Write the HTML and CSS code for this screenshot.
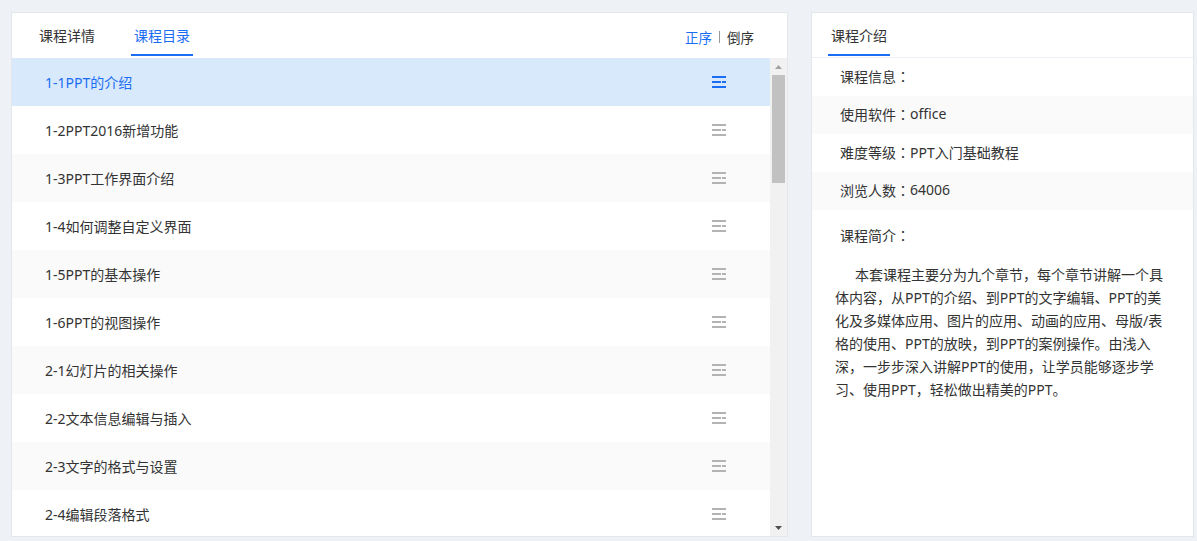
FILE: index.html
```html
<!DOCTYPE html>
<html lang="zh-CN">
<head>
<meta charset="utf-8">
<title>课程目录</title>
<link rel="stylesheet" href="styles.css">
</head>
<body>
<div class="panel panel-main">
  <div class="head">
    <div class="tab">课程详情</div>
    <div class="tab active">课程目录</div>
    <div class="order"><span class="on">正序</span><i class="sep"></i><span>倒序</span></div>
  </div>
  <div class="body">
    <ul class="list">
      <li class="row current"><span>1-1PPT的介绍</span><svg class="ico" width="14" height="12" viewBox="0 0 14 12"><rect x="0" y="0" width="14" height="2"/><rect x="0" y="5" width="9" height="2"/><rect x="10" y="5" width="4" height="2"/><rect x="0" y="10" width="14" height="2"/></svg></li>
      <li class="row"><span>1-2PPT2016新增功能</span><svg class="ico" width="14" height="12" viewBox="0 0 14 12"><rect x="0" y="0" width="14" height="2"/><rect x="0" y="5" width="9" height="2"/><rect x="10" y="5" width="4" height="2"/><rect x="0" y="10" width="14" height="2"/></svg></li>
      <li class="row"><span>1-3PPT工作界面介绍</span><svg class="ico" width="14" height="12" viewBox="0 0 14 12"><rect x="0" y="0" width="14" height="2"/><rect x="0" y="5" width="9" height="2"/><rect x="10" y="5" width="4" height="2"/><rect x="0" y="10" width="14" height="2"/></svg></li>
      <li class="row"><span>1-4如何调整自定义界面</span><svg class="ico" width="14" height="12" viewBox="0 0 14 12"><rect x="0" y="0" width="14" height="2"/><rect x="0" y="5" width="9" height="2"/><rect x="10" y="5" width="4" height="2"/><rect x="0" y="10" width="14" height="2"/></svg></li>
      <li class="row"><span>1-5PPT的基本操作</span><svg class="ico" width="14" height="12" viewBox="0 0 14 12"><rect x="0" y="0" width="14" height="2"/><rect x="0" y="5" width="9" height="2"/><rect x="10" y="5" width="4" height="2"/><rect x="0" y="10" width="14" height="2"/></svg></li>
      <li class="row"><span>1-6PPT的视图操作</span><svg class="ico" width="14" height="12" viewBox="0 0 14 12"><rect x="0" y="0" width="14" height="2"/><rect x="0" y="5" width="9" height="2"/><rect x="10" y="5" width="4" height="2"/><rect x="0" y="10" width="14" height="2"/></svg></li>
      <li class="row"><span>2-1幻灯片的相关操作</span><svg class="ico" width="14" height="12" viewBox="0 0 14 12"><rect x="0" y="0" width="14" height="2"/><rect x="0" y="5" width="9" height="2"/><rect x="10" y="5" width="4" height="2"/><rect x="0" y="10" width="14" height="2"/></svg></li>
      <li class="row"><span>2-2文本信息编辑与插入</span><svg class="ico" width="14" height="12" viewBox="0 0 14 12"><rect x="0" y="0" width="14" height="2"/><rect x="0" y="5" width="9" height="2"/><rect x="10" y="5" width="4" height="2"/><rect x="0" y="10" width="14" height="2"/></svg></li>
      <li class="row"><span>2-3文字的格式与设置</span><svg class="ico" width="14" height="12" viewBox="0 0 14 12"><rect x="0" y="0" width="14" height="2"/><rect x="0" y="5" width="9" height="2"/><rect x="10" y="5" width="4" height="2"/><rect x="0" y="10" width="14" height="2"/></svg></li>
      <li class="row"><span>2-4编辑段落格式</span><svg class="ico" width="14" height="12" viewBox="0 0 14 12"><rect x="0" y="0" width="14" height="2"/><rect x="0" y="5" width="9" height="2"/><rect x="10" y="5" width="4" height="2"/><rect x="0" y="10" width="14" height="2"/></svg></li>
    </ul>
    <div class="scrollbar">
      <div class="sb-btn"><svg width="7" height="4" viewBox="0 0 7 4"><polygon points="3.5,0 7,4 0,4" fill="#a3a3a3"/></svg></div>
      <div class="sb-thumb"></div>
      <div class="sb-track"></div>
      <div class="sb-btn"><svg width="7" height="4" viewBox="0 0 7 4"><polygon points="0,0 7,0 3.5,4" fill="#505050"/></svg></div>
    </div>
  </div>
</div>
<div class="panel panel-side">
  <div class="head head-line">
    <div class="tab active-side">课程介绍</div>
  </div>
  <div class="info">
    <div class="info-row">课程信息<span class="colon" lang="ja">：</span></div>
    <div class="info-row">使用软件<span class="colon" lang="ja">：</span>office</div>
    <div class="info-row">难度等级<span class="colon" lang="ja">：</span>PPT入门基础教程</div>
    <div class="info-row">浏览人数<span class="colon" lang="ja">：</span>64006</div>
  </div>
  <div class="intro-title">课程简介<span class="colon" lang="ja">：</span></div>
  <p class="intro">本套课程主要分为九个章节，每个章节讲解一个具体内容，从PPT的介绍、到PPT的文字编辑、PPT的美化及多媒体应用、图片的应用、动画的应用、母版/表格的使用、PPT的放映，到PPT的案例操作。由浅入深，一步步深入讲解PPT的使用，让学员能够逐步学习、使用PPT，轻松做出精美的PPT。</p>
</div>
</body>
</html>
```

FILE: styles.css
```css
* { box-sizing: border-box; }
html, body { margin: 0; }
body {
  width: 1197px;
  height: 541px;
  overflow: hidden;
  background: #eef1f5;
  padding: 12px 0 0 11px;
  display: flex;
  align-items: flex-start;
  gap: 23px;
  font-family: "Noto Sans", "Noto Sans CJK SC", sans-serif;
  font-size: 14px;
  color: #333;
}
.panel {
  height: 525px;
  background: #fff;
  border: 1px solid #e3e6ea;
  display: flex;
  flex-direction: column;
}
.panel-main { width: 777px; }
.panel-side { width: 383px; }

.head {
  height: 45px;
  flex: none;
  display: flex;
  align-items: flex-start;
  padding: 0 33px 0 24px;
}
.tab {
  height: 43px;
  padding: 5px 3px 0;
  border-bottom: 2px solid transparent;
  display: flex;
  align-items: center;
  line-height: 20px;
  color: #333;
  margin-right: 33px;
}
.tab.active { color: #1b6ef3; border-bottom-color: #1b6ef3; }
.order {
  margin-left: auto;
  height: 43px;
  padding-top: 5px;
  display: flex;
  align-items: center;
  font-size: 13.5px;
  color: #333;
}
.order .on { color: #1b6ef3; }
.sep {
  display: block;
  width: 1px;
  height: 12px;
  background: #999;
  margin: 0 7px;
}

.body {
  flex: 1;
  min-height: 0;
  display: flex;
}
.list {
  flex: 1;
  margin: 0;
  padding: 0;
  list-style: none;
  overflow: hidden;
}
.row {
  height: 48px;
  display: flex;
  align-items: center;
  justify-content: space-between;
  padding: 0 44px 1px 33px;
  background: #fff;
}
.row .ico { margin-top: 1px; }
.row:nth-child(odd) { background: #fafafa; }
.row.current { background: #d8e9fc; color: #1b6ef3; }
.ico { display: block; fill: #b3b3b3; }
.row.current .ico { fill: #1b6ef3; }

.scrollbar {
  width: 17px;
  flex: none;
  background: #f1f1f1;
  display: flex;
  flex-direction: column;
}
.sb-btn {
  height: 17px;
  flex: none;
  display: flex;
  align-items: center;
  justify-content: center;
}
.sb-btn svg { display: block; }
.sb-thumb {
  height: 108px;
  flex: none;
  margin: 0 2px;
  background: #c1c1c1;
}
.sb-track { flex: 1; }

.head-line {
  border-bottom: 1px solid #ebeef2;
  padding-left: 16px;
}
.active-side { border-bottom-color: #1b6ef3; }

.info-row {
  height: 38px;
  display: flex;
  align-items: center;
  white-space: pre;
  padding: 0 0 3px 28px;
}
.info-row:nth-child(even) { background: #fafafa; }

.colon {
  font-family: "Noto Sans CJK JP", sans-serif;
}

.intro-title {
  padding: 15px 28px 0;
  line-height: 20px;
}
.intro {
  margin: 17px 0 0;
  padding: 0 24px 0 23px;
  line-height: 23px;
  text-indent: 20px;
}
```
